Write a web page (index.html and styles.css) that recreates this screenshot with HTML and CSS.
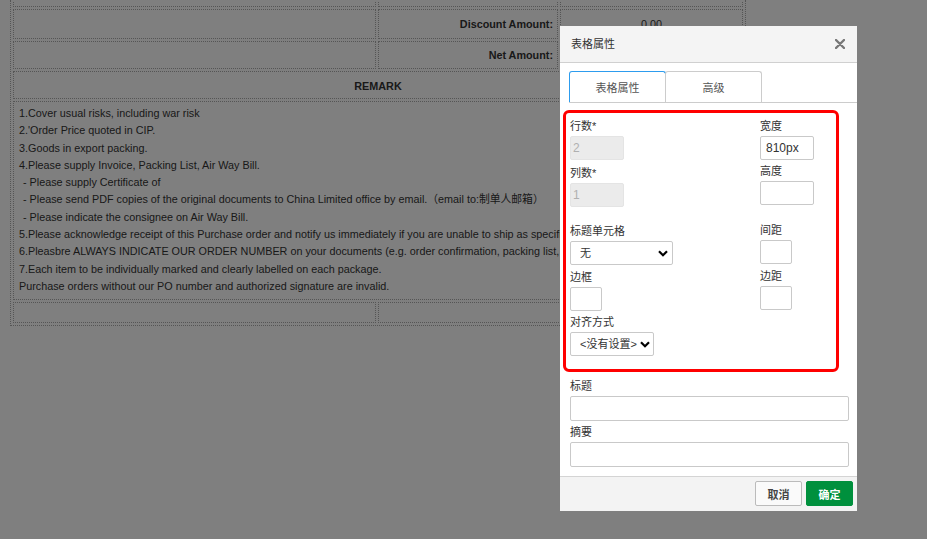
FILE: index.html
```html
<!DOCTYPE html>
<html lang="zh-CN">
<head>
    <meta charset="UTF-8">
    <meta name="viewport" content="width=device-width, initial-scale=1.0">
    <title>表格属性</title>
    <link rel="stylesheet" href="styles.css">
</head>
<body>
    <div class="page">
        <table class="doc">
            <colgroup>
                <col class="c1">
                <col class="c2">
                <col class="c3">
            </colgroup>
            <tr class="r-cut"><td></td><td></td><td></td></tr>
            <tr class="r-disc"><td></td><td class="lbl">Discount Amount:</td><td class="num">0.00</td></tr>
            <tr class="r-net"><td></td><td class="lbl">Net Amount:</td><td class="num">0.00</td></tr>
            <tr class="r-head"><td colspan="3" class="remark-head">REMARK</td></tr>
            <tr>
                <td colspan="3" class="remark">
                    <div>1.Cover usual risks, including war risk</div>
                    <div>2.'Order Price quoted in CIP.</div>
                    <div>3.Goods in export packing.</div>
                    <div>4.Please supply Invoice, Packing List, Air Way Bill.</div>
                    <div class="sub">- Please supply Certificate of</div>
                    <div class="sub">- Please send PDF copies of the original documents to China Limited office by email.（email to:制单人邮箱）</div>
                    <div class="sub">- Please indicate the consignee on Air Way Bill.</div>
                    <div>5.Please acknowledge receipt of this Purchase order and notify us immediately if you are unable to ship as specified.</div>
                    <div>6.Pleasbre ALWAYS INDICATE OUR ORDER NUMBER on your documents (e.g. order confirmation, packing list, invoice).</div>
                    <div>7.Each item to be individually marked and clearly labelled on each package.</div>
                    <div>Purchase orders without our PO number and authorized signature are invalid.</div>
                </td>
            </tr>
            <tr class="r-foot"><td></td><td colspan="2"></td></tr>
        </table>
    </div>

    <div class="mask"></div>

    <div class="dialog">
        <div class="dlg-head">
            <span class="dlg-title">表格属性</span>
            <svg class="dlg-close" width="10" height="10" viewBox="0 0 10 10">
                <path d="M1 1L9 9M9 1L1 9" stroke="#777" stroke-width="2.4" stroke-linecap="round"/>
            </svg>
        </div>
        <div class="dlg-body">
            <div class="tabs">
                <span class="tab active">表格属性</span>
                <span class="tab">高级</span>
            </div>
            <div class="props">
                <div class="col col-left">
                    <div class="field"><label>行数*</label><input class="w54" value="2" disabled></div>
                    <div class="field f-cols"><label>列数*</label><input class="w54" value="1" disabled></div>
                    <div class="field f-headers">
                        <label>标题单元格</label>
                        <span class="select-wrap">
                            <select class="w103"><option>无</option></select>
                            <svg class="chev" width="10" height="7" viewBox="0 0 10 7"><path d="M1 1.2L5 5.2L9 1.2" fill="none" stroke="#000" stroke-width="2.2"/></svg>
                        </span>
                    </div>
                    <div class="field f-border"><label>边框</label><input class="w32"></div>
                    <div class="field f-align">
                        <label>对齐方式</label>
                        <span class="select-wrap">
                            <select class="w84"><option>&lt;没有设置&gt;</option></select>
                            <svg class="chev" width="10" height="7" viewBox="0 0 10 7"><path d="M1 1.2L5 5.2L9 1.2" fill="none" stroke="#000" stroke-width="2.2"/></svg>
                        </span>
                    </div>
                </div>
                <div class="col col-right">
                    <div class="field"><label>宽度</label><input class="w54" value="810px"></div>
                    <div class="field f-height"><label>高度</label><input class="w54"></div>
                    <div class="field f-spacing"><label>间距</label><input class="w32"></div>
                    <div class="field f-padding"><label>边距</label><input class="w32"></div>
                </div>
            </div>
            <div class="field f-caption"><label>标题</label><input class="wide"></div>
            <div class="field f-summary"><label>摘要</label><input class="wide"></div>
        </div>
        <div class="dlg-foot">
            <button class="btn">取消</button>
            <button class="btn ok">确定</button>
        </div>
        <div class="mark"></div>
    </div>
</body>
</html>
```

FILE: styles.css
```css
* {
    box-sizing: border-box;
}
body {
    margin: 0;
    background: #fff;
    font-family: "Liberation Sans", Arial, "Noto Sans CJK SC", sans-serif;
    font-size: 11px;
    color: #333;
}
.page {
    padding-left: 10px;
}
.doc {
    width: 736px;
    table-layout: fixed;
    border-collapse: separate;
    border-spacing: 2px;
    border: 1px dotted #aaa;
    border-top: none;
    font-size: 10.8px;
}
.c1 { width: 363px; }
.c2 { width: 180px; }
.c3 { width: 183px; }
.doc td {
    border: 1px dotted #aaa;
    padding: 0;
}
.r-cut td {
    border-top: none;
    height: 5px;
}
.r-disc td { height: 30px; }
.r-net td { height: 28px; }
.r-head td { height: 28px; }
.r-foot td { height: 21px; }
.lbl {
    text-align: right;
    font-weight: bold;
    padding-right: 4px !important;
}
.num {
    text-align: center;
}
.remark-head {
    text-align: center;
    font-weight: bold;
    padding-top: 2px !important;
}
.remark {
    padding: 3px 5px 4px !important;
    line-height: 17.3px;
    white-space: nowrap;
    overflow: hidden;
}
.remark .sub {
    padding-left: 4px;
}
.mask {
    position: fixed;
    inset: 0;
    background: rgba(0, 0, 0, 0.5);
}

/* dialog */
.dialog {
    position: fixed;
    left: 560px;
    top: 26px;
    width: 297px;
    background: #fff;
    font-size: 11px;
    color: #333;
}
.dlg-head {
    height: 37px;
    background: #f4f4f4;
    border-bottom: 1px solid #d0d0d0;
    display: flex;
    align-items: center;
    justify-content: space-between;
    padding: 0 12px 0 11px;
}
.dlg-title {
    line-height: 36px;
}
.dlg-body {
    padding: 0 8px 9px 10px;
}
.tabs {
    display: flex;
    margin: 8px -8px 0 -1px;
    border-bottom: 1px solid #ccc;
}
.tab {
    width: 97px;
    height: 31px;
    padding-top: 2px;
    line-height: 28px;
    text-align: center;
    color: #555;
    border: 1px solid #ccc;
    border-bottom: none;
    border-radius: 3px 3px 0 0;
}
.tab.active {
    border-color: #2d9cee;
}
.tab + .tab {
    margin-left: -1px;
}
.props {
    display: flex;
    margin-top: 16px;
}
.col-left {
    width: 190px;
}
.field label {
    display: block;
    line-height: 14px;
    margin-bottom: 3px;
}
.f-cols { margin-top: 6px; }
.f-headers { margin-top: 17px; }
.f-border { margin-top: 5px; }
.f-align { margin-top: 4px; }
.f-height { margin-top: 4px; }
.f-spacing { margin-top: 18px; }
.f-padding { margin-top: 5px; }
.f-caption { margin-top: 23px; }
.f-summary { margin-top: 4px; }
input, select {
    display: block;
    height: 24px;
    border: 1px solid #c9c9c9;
    border-radius: 2px;
    background: #fff;
    font-family: inherit;
    font-size: 12px;
    color: #333;
    padding: 0 5px;
    margin: 0;
    outline: none;
}
input:disabled {
    background: #ebebeb;
    border-color: #e4e4e4;
    color: #b0b0b0;
    padding-left: 2px;
}
.w54 { width: 54px; }
.w32 { width: 32px; }
.w103 { width: 103px; }
.w84 { width: 84px; }
.wide {
    width: 279px;
    height: 25px;
}
select {
    appearance: none;
    -webkit-appearance: none;
    padding-left: 9px;
    font-size: 11px;
}
.select-wrap {
    position: relative;
    display: inline-block;
}
.chev {
    position: absolute;
    right: 5px;
    top: 9px;
}
.w84 + .chev {
    right: 4px;
}
.dlg-foot {
    height: 35px;
    background: #f3f3f3;
    border-top: 1px solid #d4d4d4;
    display: flex;
    justify-content: flex-end;
    gap: 4px;
    padding: 4px 4px 0 0;
}
.btn {
    width: 47px;
    height: 25px;
    border: 1px solid #bbb;
    border-radius: 2px;
    background: #fafafa;
    color: #444;
    font-family: inherit;
    font-size: 11px;
    font-weight: bold;
    padding: 0;
}
.btn.ok {
    background: #00903d;
    border-color: #00903d;
    color: #fff;
}
.mark {
    position: absolute;
    left: 3px;
    top: 84px;
    width: 276px;
    height: 262px;
    border: 3px solid #f00;
    border-radius: 6px;
    pointer-events: none;
}
```
